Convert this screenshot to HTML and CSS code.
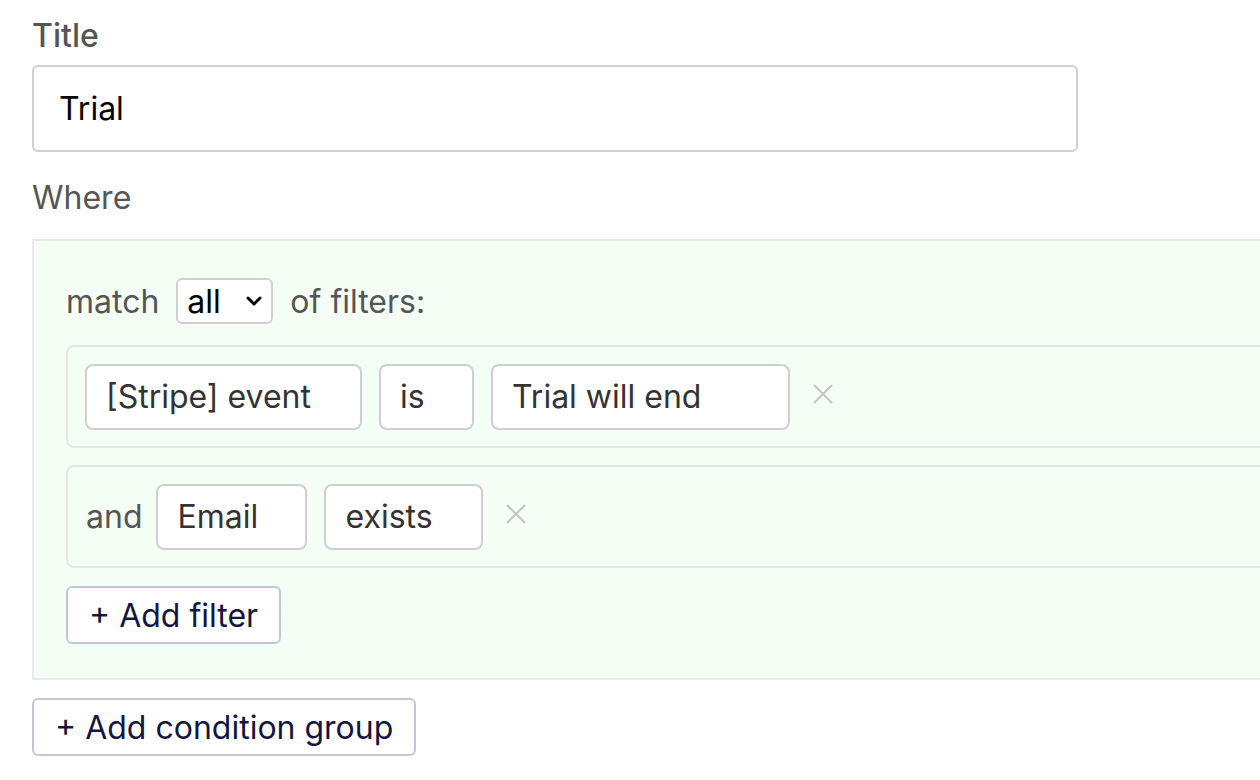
FILE: index.html
```html
<!DOCTYPE html>
<html>
<head>
<meta charset="utf-8">
<link rel="stylesheet" href="styles.css">
</head>
<body>
<div class="page">
  <div class="label label-title">Title</div>
  <div class="title-input">Trial</div>
  <div class="label label-where">Where</div>
  <div class="group">
    <div class="match-line">
      <span>match</span>
      <span class="select">all
        <svg class="chev" width="16" height="10" viewBox="0 0 16 10"><path d="M2 2 L8 8 L14 2" fill="none" stroke="#000" stroke-width="3" stroke-linecap="round" stroke-linejoin="round"/></svg>
      </span>
      <span>of filters:</span>
    </div>
    <div class="filter-row">
      <span class="pill w-event">[Stripe] event</span>
      <span class="pill w-is">is</span>
      <span class="pill w-trial">Trial will end</span>
      <svg class="remove" width="20" height="20" viewBox="0 0 20 20"><path d="M1 1 L19 19 M19 1 L1 19" stroke="#c4c4c4" stroke-width="2"/></svg>
    </div>
    <div class="filter-row">
      <span class="conj">and</span>
      <span class="pill w-email">Email</span>
      <span class="pill w-exists">exists</span>
      <svg class="remove" width="20" height="20" viewBox="0 0 20 20"><path d="M1 1 L19 19 M19 1 L1 19" stroke="#c4c4c4" stroke-width="2"/></svg>
    </div>
    <div class="add-wrap"><button class="btn">+ Add filter</button></div>
  </div>
  <div class="after"><button class="btn">+ Add condition group</button></div>
</div>
</body>
</html>
```

FILE: styles.css
```css
html, body {
  margin: 0;
  padding: 0;
  background: #fff;
  overflow: hidden;
}
body {
  font-family: Inter, "Liberation Sans", sans-serif;
}
.page {
  padding: 16px 0 0 32px;
  width: 1300px;
}
.label {
  font-size: 32px;
  line-height: 40px;
  color: #555;
}
.label-title {
  font-weight: 500;
  margin-bottom: 9px;
}
.title-input {
  box-sizing: border-box;
  width: 1046px;
  height: 87px;
  border: 2px solid #d0d0d0;
  border-radius: 6px;
  padding-left: 25px;
  font-size: 32px;
  color: #000;
  display: flex;
  align-items: center;
}
.label-where {
  margin-top: 26px;
  margin-bottom: 21px;
}
.group {
  box-sizing: border-box;
  border: 2px solid #ebebeb;
  background: #f5fef5;
  padding: 37px 0 34px 32px;
  display: flex;
  flex-direction: column;
  gap: 17px;
}
.match-line {
  display: flex;
  align-items: center;
  gap: 17px;
  font-size: 32px;
  color: #555;
  height: 46px;
  margin-bottom: 4px;
}
.select {
  box-sizing: border-box;
  width: 97px;
  height: 46px;
  border: 2px solid #d0d0d0;
  border-radius: 6px;
  background: #fff;
  color: #000;
  font-size: 32px;
  display: flex;
  align-items: center;
  justify-content: space-between;
  padding: 0 9px 0 9px;
}
.chev {
  display: block;
}
.filter-row {
  box-sizing: border-box;
  height: 103px;
  border: 2px solid #e6e6e6;
  border-right: none;
  border-radius: 8px 0 0 8px;
  display: flex;
  align-items: center;
  gap: 17px;
  padding-left: 17px;
}
.pill {
  box-sizing: border-box;
  height: 66px;
  border: 2px solid #cfcfcf;
  border-radius: 8px;
  background: #fff;
  padding: 0 19px;
  display: flex;
  align-items: center;
  font-size: 32px;
  color: #333;
}
.w-event { width: 277px; }
.w-is { width: 95px; }
.w-trial { width: 299px; }
.w-email { width: 151px; }
.w-exists { width: 159px; }
.conj {
  font-size: 32px;
  color: #555;
  margin-left: 1px;
  margin-right: -3px;
}
.remove {
  margin-left: 6px;
  margin-top: -6px;
}
.add-wrap {
  margin-top: 1px;
}
.btn {
  box-sizing: border-box;
  height: 58px;
  border: 2px solid #c3c5dc;
  border-radius: 6px;
  background: #fff;
  color: #14153f;
  font-family: Inter, "Liberation Sans", sans-serif;
  font-size: 32px;
  padding: 0 21px;
  margin: 0;
}
.after {
  margin-top: 18px;
}
```
